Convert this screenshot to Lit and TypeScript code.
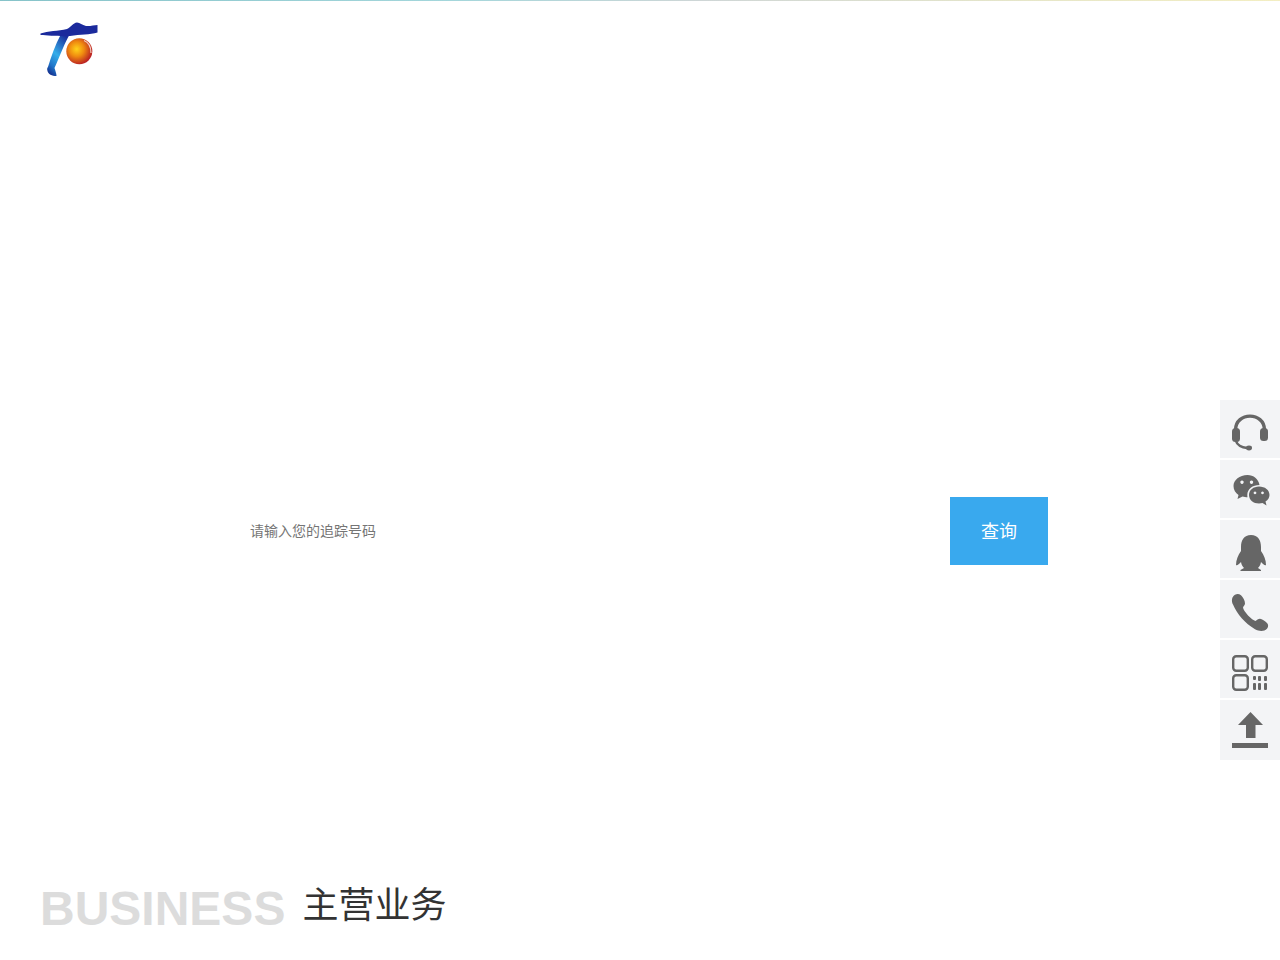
import { LitElement, html, css, svg } from "lit";
import { customElement } from "lit/decorators.js";

const icons = [
  svg`<path d="M5.500 17 C5.500 -1.500 34.500 -1.500 34.500 17" fill="none" stroke="#666" stroke-width="3.400"/>
      <rect x="2" y="15" width="8" height="14" rx="3.500" fill="#666"/><rect x="30" y="15" width="8" height="13" rx="3.500" fill="#666"/>
      <path d="M6 28 C7 32 12 34.500 17 35" fill="none" stroke="#666" stroke-width="2.600"/><ellipse cx="19" cy="35" rx="3" ry="2.400" fill="#666"/>`,
  svg`<g transform="translate(1.500 -2)"><path fill-rule="evenodd" fill="#666" d="M16 4 C8 4 2 9 2 15 C2 19 4 22 7 24 L6 28 L11 25.500 C13 26 14 26.200 16 26.200 C16 26 15.800 25 15.800 24 C15.800 18 21 14 28 14 C27 8 22 4 16 4 Z M10.500 9.500 a1.700 1.700 0 1 0 .01 0 Z M20 9.500 a1.700 1.700 0 1 0 .01 0 Z"/>
      <path fill-rule="evenodd" fill="#666" d="M27.500 15.500 C22 15.500 17.500 19 17.500 24 C17.500 29 22 32.500 27.500 32.500 C29 32.500 30 32.300 31 32 L35 34.500 L34 30.500 C36.500 29 38 26.500 38 24 C38 19 33.500 15.500 27.500 15.500 Z M23.500 20.500 a1.400 1.400 0 1 0 .01 0 Z M31 20.500 a1.400 1.400 0 1 0 .01 0 Z"/></g>`,
  svg`<path transform="translate(1 0)" fill="#666" d="M20 2 C13 2 10 7 10 14 L10 18 C7 22 5 27 5 32 C6 33 8 31 10 29 C10.500 32 11.500 33.500 13 35 L9.500 37 L9.500 38 L30 38 L30 37 L27 35 C28.500 33.500 29.500 32 30 29 C32 31 34 33 35 32 C35 27 33 22 30 18 L30 14 C30 7 27 2 20 2 Z"/>`,
  svg`<path transform="translate(0 -1) scale(1 1.05)" fill="#666" d="M5 2.500 C2 4 1 8 3 12 C7 21 15 30 25 35.500 C29 37.500 34 38 37 35 C38.500 33 38.500 31 37 29.500 C35 27.500 32 26 30 25.500 C28 25.500 27 27 25.500 27.500 C22 27 14 19 13 15 C13 13.500 15 13 15 11 C15 8 13 5 11 3 C9 1.500 7 1.500 5 2.500 Z"/>`,
  svg`<g fill="none" stroke="#666" stroke-width="2.400"><rect x="3.200" y="3.200" width="14.600" height="14.600" rx="3"/><rect x="22.200" y="3.200" width="14.600" height="14.600" rx="3"/><rect x="3.200" y="22.200" width="14.600" height="14.600" rx="3"/></g>
      <g fill="#666"><rect x="23" y="23" width="3" height="4" rx="1"/><rect x="28" y="23" width="3" height="5" rx="1"/><rect x="34" y="23" width="3" height="5" rx="1"/><rect x="23" y="30" width="3" height="7" rx="1"/><rect x="28" y="30" width="3" height="7" rx="1"/><rect x="34" y="30" width="3" height="7" rx="1"/></g>`,
  svg`<path fill="#666" d="M20.500 -1 L33 12 L25.500 12 L25.500 25 L16 25 L16 12 L8 12 Z"/><rect x="2" y="30" width="36" height="5" fill="#666"/>`,
];

@customElement("app-root")
export class AppRoot extends LitElement {
  static styles = css`
    :host { display: block; height: 960px; overflow: hidden; background: #fff; font-family: "Liberation Sans", "Noto Sans CJK SC", sans-serif; position: relative; }
    .topline { height: 1px; background: linear-gradient(90deg, #86c3c9 0%, #a3d6db 35%, #cfd6d6 55%, #e6e6c8 80%, #f3eec2 100%); }
    header { height: 88px; padding: 20px 40px 0; box-sizing: border-box; }
    .logo { display: block; width: 60px; height: 58px; }
    .search { display: flex; align-items: center; box-sizing: border-box; width: 808px; height: 68px; margin: 408px 0 0 240px; padding-left: 10px; }
    .placeholder { flex: 1; font-size: 14px; color: #757575; padding-bottom: 2px; }
    .btn { width: 98px; height: 68px; border: 0; padding: 0 0 2px; background: #39a9ee; color: #fff; font: inherit; font-size: 18px; }
    .biz { display: flex; align-items: flex-end; gap: 17px; margin: 313px 0 0 40px; }
    .en { font-size: 48px; font-weight: 700; line-height: 56px; color: #dcdcdc; }
    .cn { font-size: 36px; line-height: 56px; color: #333; padding-bottom: 3px; }
    .rail { position: absolute; right: 0; top: 400px; width: 60px; display: flex; flex-direction: column; gap: 2px; }
    .cell { height: 58px; box-sizing: border-box; padding-top: 13px; background: #f3f4f6; display: flex; align-items: flex-start; justify-content: center; }
    .cell:last-child { height: 60px; }
    .cell svg { width: 40px; height: 40px; display: block; overflow: visible; }
  `;
  render() {
    return html`
      <div class="topline"></div>
      <header>
        <svg class="logo" viewBox="0 0 60 58">
          <defs>
            <linearGradient id="stem" x1="0.7" y1="0" x2="0.2" y2="1">
              <stop offset="0" stop-color="#1a2f9c"/><stop offset="0.5" stop-color="#35aeea"/><stop offset="0.8" stop-color="#1f74c8"/><stop offset="1" stop-color="#14308f"/>
            </linearGradient>
            <radialGradient id="ball" cx="0.4" cy="0.42" r="0.62">
              <stop offset="0" stop-color="#ffd21a"/><stop offset="0.45" stop-color="#f08c10"/><stop offset="1" stop-color="#b81c24"/>
            </radialGradient>
          </defs>
          <path fill="url(#stem)" d="M21 13 L30 13 C25 21 20 35 14.500 47 C15.500 50 16.500 53 16.500 55 C12 55 8 53 7.500 50 C7 48 7 47 8 46 C11 36 15 24 21 13 Z"/>
          <path fill="#1b2a9c" d="M0.500 12.500 C8 10 18 10 27 8 C31 6 33 2 37 1.500 C40 2 42 4 46 5 C50 5.500 54 4 57.500 4 L57.500 11.500 C50 14 40 13 30 15 C20 15.500 8 14.500 0.500 14 Z"/>
          <circle cx="39.300" cy="30.200" r="13" fill="url(#ball)"/>
          <path d="M44 19.500 C49 21.500 51 26 51 32" fill="none" stroke="#f3d0c8" stroke-width="1.200"/>
        </svg>
      </header>
      <div class="search">
        <div class="placeholder">请输入您的追踪号码</div>
        <button class="btn">查询</button>
      </div>
      <div class="biz"><span class="en">BUSINESS</span><span class="cn">主营业务</span></div>
      <div class="rail">${icons.map((i) => html`<div class="cell"><svg viewBox="0 0 40 40">${i}</svg></div>`)}</div>
    `;
  }
}
